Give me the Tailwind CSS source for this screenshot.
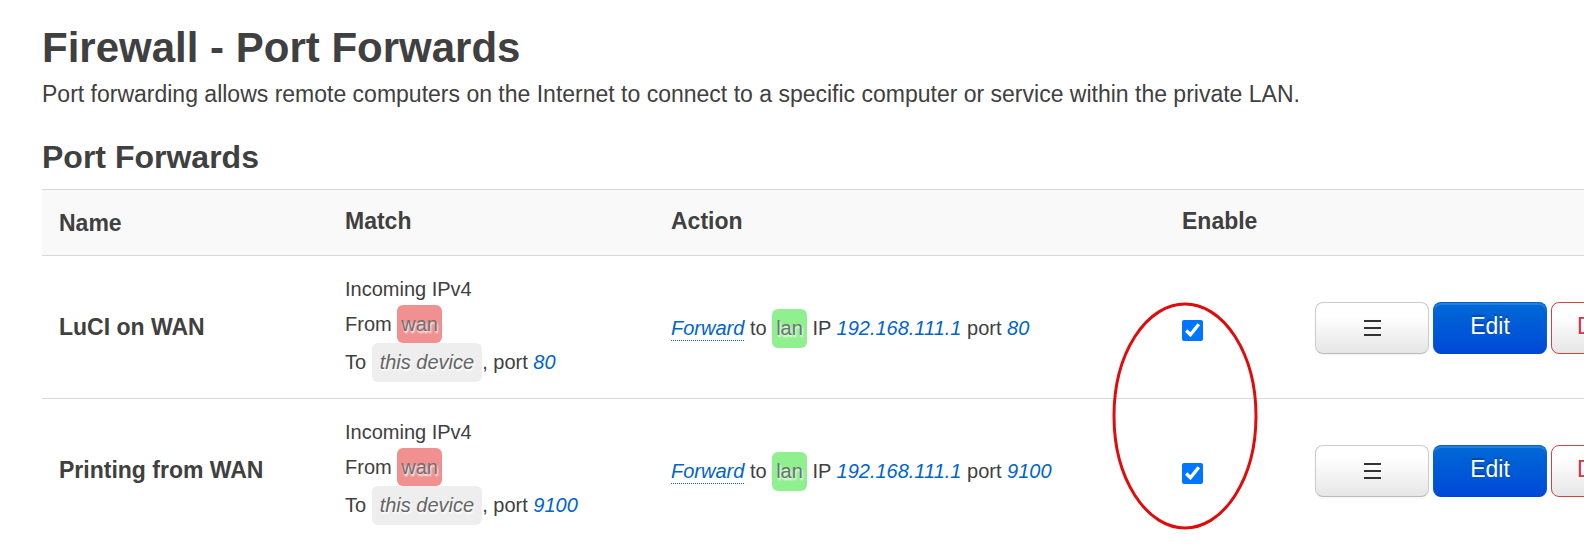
<!DOCTYPE html>
<html lang="en">
<head>
<meta charset="utf-8">
<title>Firewall - Port Forwards</title>
<script src="https://cdn.jsdelivr.net/npm/@tailwindcss/browser@4"></script>
</head>
<body class="overflow-hidden bg-white font-['Liberation_Sans',Arial,sans-serif] text-[23px] leading-8 text-[#404040]">
<main class="relative pt-6 pl-[42px]">
  <h1 class="text-[42px] leading-[48px] font-bold">Firewall - Port Forwards</h1>
  <p class="mt-1.5">Port forwarding allows remote computers on the Internet to connect to a specific computer or service within the private LAN.</p>
  <h2 class="mt-[27px] mb-3 text-[32px] leading-10 font-bold">Port Forwards</h2>

  <table class="w-[1700px] table-fixed border-collapse text-left">
    <colgroup>
      <col class="w-[286px]"><col class="w-[326px]"><col class="w-[511px]"><col class="w-[133px]"><col>
    </colgroup>
    <thead>
      <tr class="h-[66px] border-y border-[#d8d8d8] bg-[#f9f9f9]">
        <th class="px-[17px]">Name</th>
        <th class="px-[17px] pb-1">Match</th>
        <th class="px-[17px] pb-1">Action</th>
        <th class="px-[17px] pb-1">Enable</th>
        <th aria-label="Controls"></th>
      </tr>
    </thead>
    <tbody>
      <tr class="border-b border-[#d8d8d8]">
        <th class="px-[17px]" scope="row">LuCI on WAN</th>
        <td class="px-[17px] py-4 text-[20px]">
          <div class="pt-px">Incoming IPv4</div>
          <div class="flex items-start leading-[38px] whitespace-pre"><span>From </span><span class="rounded-md bg-[#f09090] px-1 text-[#707070] [text-shadow:1px_2px_2px_#fff]">wan</span></div>
          <div class="flex items-start leading-[39px] whitespace-pre"><span>To </span><em class="rounded-md bg-[#eee] px-2 text-[#666] [text-shadow:1px_2px_2px_#fff]">this device</em><span>, port </span><em class="text-[#0064cd]">80</em></div>
        </td>
        <td class="px-[17px] pt-0.5 text-[20px]">
          <div class="flex items-center whitespace-pre"><em class="border-b border-dotted border-[#0064cd] leading-6 text-[#0064cd]">Forward</em><span> to </span><span class="rounded-md bg-[#90f090] px-1 leading-[39px] text-[#707070] [text-shadow:1px_2px_2px_#fff]">lan</span><span> IP </span><em class="text-[#0064cd]">192.168.111.1</em><span> port </span><em class="text-[#0064cd]">80</em></div>
        </td>
        <td class="px-[17px] pt-1.5"><input type="checkbox" checked aria-label="Enable LuCI on WAN" class="block size-[21px] accent-[#0075ff]"></td>
        <td class="px-[17px]">
          <div class="flex gap-1 pt-px">
            <button aria-label="Drag to reorder" class="flex h-[52px] w-[114px] items-center justify-center rounded-lg border border-[#ccc] border-b-[#bbb] bg-linear-to-b from-white from-25% to-[#e6e6e6] text-[#333] shadow-[0_1px_2px_rgba(0,0,0,0.05)]"><svg class="h-5 w-[18px]" viewBox="0 0 18 20" fill="none" stroke="currentColor" stroke-width="2"><path d="M1 3h17M1 10h17M1 17h17"/></svg></button>
            <button class="h-[52px] w-[114px] rounded-lg border border-[#0064cd] border-b-[#0048c8] bg-linear-to-b from-[#0069d6] to-[#0048d8] pb-1 text-white shadow-[inset_0_2px_0_rgba(255,255,255,0.15)] [text-shadow:0_-2px_1px_rgba(0,0,0,0.25)]">Edit</button>
            <button class="h-[52px] rounded-lg border border-[#c44] bg-linear-to-b from-white from-25% to-[#e6e6e6] px-[25px] pb-1 text-[#c43c50]">Delete</button>
          </div>
        </td>
      </tr>
      <tr>
        <th class="px-[17px]" scope="row">Printing from WAN</th>
        <td class="px-[17px] py-4 text-[20px]">
          <div class="pt-px">Incoming IPv4</div>
          <div class="flex items-start leading-[38px] whitespace-pre"><span>From </span><span class="rounded-md bg-[#f09090] px-1 text-[#707070] [text-shadow:1px_2px_2px_#fff]">wan</span></div>
          <div class="flex items-start leading-[39px] whitespace-pre"><span>To </span><em class="rounded-md bg-[#eee] px-2 text-[#666] [text-shadow:1px_2px_2px_#fff]">this device</em><span>, port </span><em class="text-[#0064cd]">9100</em></div>
        </td>
        <td class="px-[17px] pt-0.5 text-[20px]">
          <div class="flex items-center whitespace-pre"><em class="border-b border-dotted border-[#0064cd] leading-6 text-[#0064cd]">Forward</em><span> to </span><span class="rounded-md bg-[#90f090] px-1 leading-[39px] text-[#707070] [text-shadow:1px_2px_2px_#fff]">lan</span><span> IP </span><em class="text-[#0064cd]">192.168.111.1</em><span> port </span><em class="text-[#0064cd]">9100</em></div>
        </td>
        <td class="px-[17px] pt-1.5"><input type="checkbox" checked aria-label="Enable Printing from WAN" class="block size-[21px] accent-[#0075ff]"></td>
        <td class="px-[17px]">
          <div class="flex gap-1 pt-px">
            <button aria-label="Drag to reorder" class="flex h-[52px] w-[114px] items-center justify-center rounded-lg border border-[#ccc] border-b-[#bbb] bg-linear-to-b from-white from-25% to-[#e6e6e6] text-[#333] shadow-[0_1px_2px_rgba(0,0,0,0.05)]"><svg class="h-5 w-[18px]" viewBox="0 0 18 20" fill="none" stroke="currentColor" stroke-width="2"><path d="M1 3h17M1 10h17M1 17h17"/></svg></button>
            <button class="h-[52px] w-[114px] rounded-lg border border-[#0064cd] border-b-[#0048c8] bg-linear-to-b from-[#0069d6] to-[#0048d8] pb-1 text-white shadow-[inset_0_2px_0_rgba(255,255,255,0.15)] [text-shadow:0_-2px_1px_rgba(0,0,0,0.25)]">Edit</button>
            <button class="h-[52px] rounded-lg border border-[#c44] bg-linear-to-b from-white from-25% to-[#e6e6e6] px-[25px] pb-1 text-[#c43c50]">Delete</button>
          </div>
        </td>
      </tr>
    </tbody>
  </table>

  <!-- highlight ring around the Enable column -->
  <svg class="pointer-events-none absolute top-[302px] left-[1112px] h-[228px] w-[147px]" viewBox="0 0 147 228" fill="none"><ellipse cx="73" cy="114" rx="71" ry="112" stroke="#e00b0b" stroke-width="3"/></svg>
</main>
</body>
</html>
